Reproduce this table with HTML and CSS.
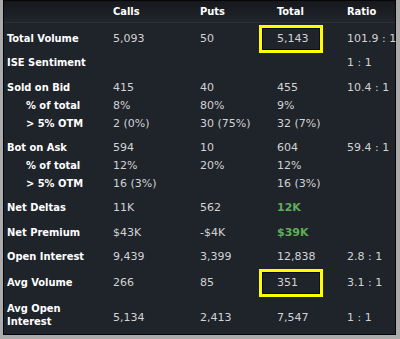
FILE: index.html
```html
<!DOCTYPE html>
<html>
<head>
<meta charset="utf-8">
<link rel="stylesheet" href="styles.css">
</head>
<body>
<div class="panel">
  <div class="row head">
    <div class="lbl"></div>
    <div>Calls</div>
    <div>Puts</div>
    <div>Total</div>
    <div>Ratio</div>
  </div>
  <div class="row g7">
    <div class="lbl">Total Volume</div>
    <div>5,093</div>
    <div>50</div>
    <div class="hl">5,143<span class="box"></span></div>
    <div>101.9 : 1</div>
  </div>
  <div class="row g6">
    <div class="lbl">ISE Sentiment</div>
    <div></div>
    <div></div>
    <div></div>
    <div>1 : 1</div>
  </div>
  <div class="row g7">
    <div class="lbl">Sold on Bid</div>
    <div>415</div>
    <div>40</div>
    <div>455</div>
    <div>10.4 : 1</div>
  </div>
  <div class="row">
    <div class="lbl sub">% of total</div>
    <div>8%</div>
    <div>80%</div>
    <div>9%</div>
    <div></div>
  </div>
  <div class="row">
    <div class="lbl sub">&gt; 5% OTM</div>
    <div>2 (0%)</div>
    <div>30 (75%)</div>
    <div>32 (7%)</div>
    <div></div>
  </div>
  <div class="row g6">
    <div class="lbl">Bot on Ask</div>
    <div>594</div>
    <div>10</div>
    <div>604</div>
    <div>59.4 : 1</div>
  </div>
  <div class="row">
    <div class="lbl sub">% of total</div>
    <div>12%</div>
    <div>20%</div>
    <div>12%</div>
    <div></div>
  </div>
  <div class="row">
    <div class="lbl sub">&gt; 5% OTM</div>
    <div>16 (3%)</div>
    <div></div>
    <div>16 (3%)</div>
    <div></div>
  </div>
  <div class="row g6">
    <div class="lbl">Net Deltas</div>
    <div>11K</div>
    <div>562</div>
    <div class="pos">12K</div>
    <div></div>
  </div>
  <div class="row g7">
    <div class="lbl">Net Premium</div>
    <div>$43K</div>
    <div>-$4K</div>
    <div class="pos">$39K</div>
    <div></div>
  </div>
  <div class="row g6">
    <div class="lbl">Open Interest</div>
    <div>9,439</div>
    <div>3,399</div>
    <div>12,838</div>
    <div>2.8 : 1</div>
  </div>
  <div class="row g8">
    <div class="lbl">Avg Volume</div>
    <div>266</div>
    <div>85</div>
    <div class="hl">351<span class="box"></span></div>
    <div>3.1 : 1</div>
  </div>
  <div class="row g9 tall">
    <div class="lbl two">Avg Open<br>Interest</div>
    <div>5,134</div>
    <div>2,413</div>
    <div>7,547</div>
    <div>1 : 1</div>
  </div>
</div>
</body>
</html>
```
FILE: styles.css
```css
html, body {
  margin: 0;
  padding: 0;
  background: #ababab;
}

body {
  width: 400px;
  height: 339px;
  overflow: hidden;
}

.panel {
  margin-left: 3px;
  width: 391px;
  height: 333px;
  background: #1f232a;
  border: 1px solid #050608;
  font-family: "DejaVu Sans", "Liberation Sans", sans-serif;
  font-size: 11px;
  color: #d2d3d5;
}

.row {
  display: grid;
  grid-template-columns: 109px 87px 77px 70px 1fr;
  height: 18px;
  align-items: center;
  line-height: 18px;
  white-space: nowrap;
}

.head {
  height: 21px;
  line-height: 21px;
  background: linear-gradient(#16181c, #1c1f24 60%, #22262c);
  border-bottom: 1px solid #2b2f36;
  color: #ffffff;
  font-family: "DejaVu Sans Condensed", "DejaVu Sans", sans-serif;
  font-stretch: condensed;
  font-weight: bold;
}

.g6 { margin-top: 6px; }
.g7 { margin-top: 7px; }
.g8 { margin-top: 8px; }
.g9 { margin-top: 9px; }

.lbl {
  padding-left: 3px;
  color: #ffffff;
  font-family: "DejaVu Sans Condensed", "DejaVu Sans", sans-serif;
  font-stretch: condensed;
  font-weight: bold;
}

.lbl.sub {
  padding-left: 22px;
}

.tall {
  height: 27px;
}

.lbl.two {
  line-height: 13px;
}

.tall > div:not(.lbl) {
  padding-top: 6px;
}

.pos {
  color: #5fae57;
  font-weight: bold;
}

.hl {
  position: relative;
}

.box {
  position: absolute;
  left: -18px;
  top: -5px;
  width: 58px;
  height: 22px;
  border: 3px solid #ffff00;
  box-shadow: inset 0 0 0 1px #0a0a12;
}
```
